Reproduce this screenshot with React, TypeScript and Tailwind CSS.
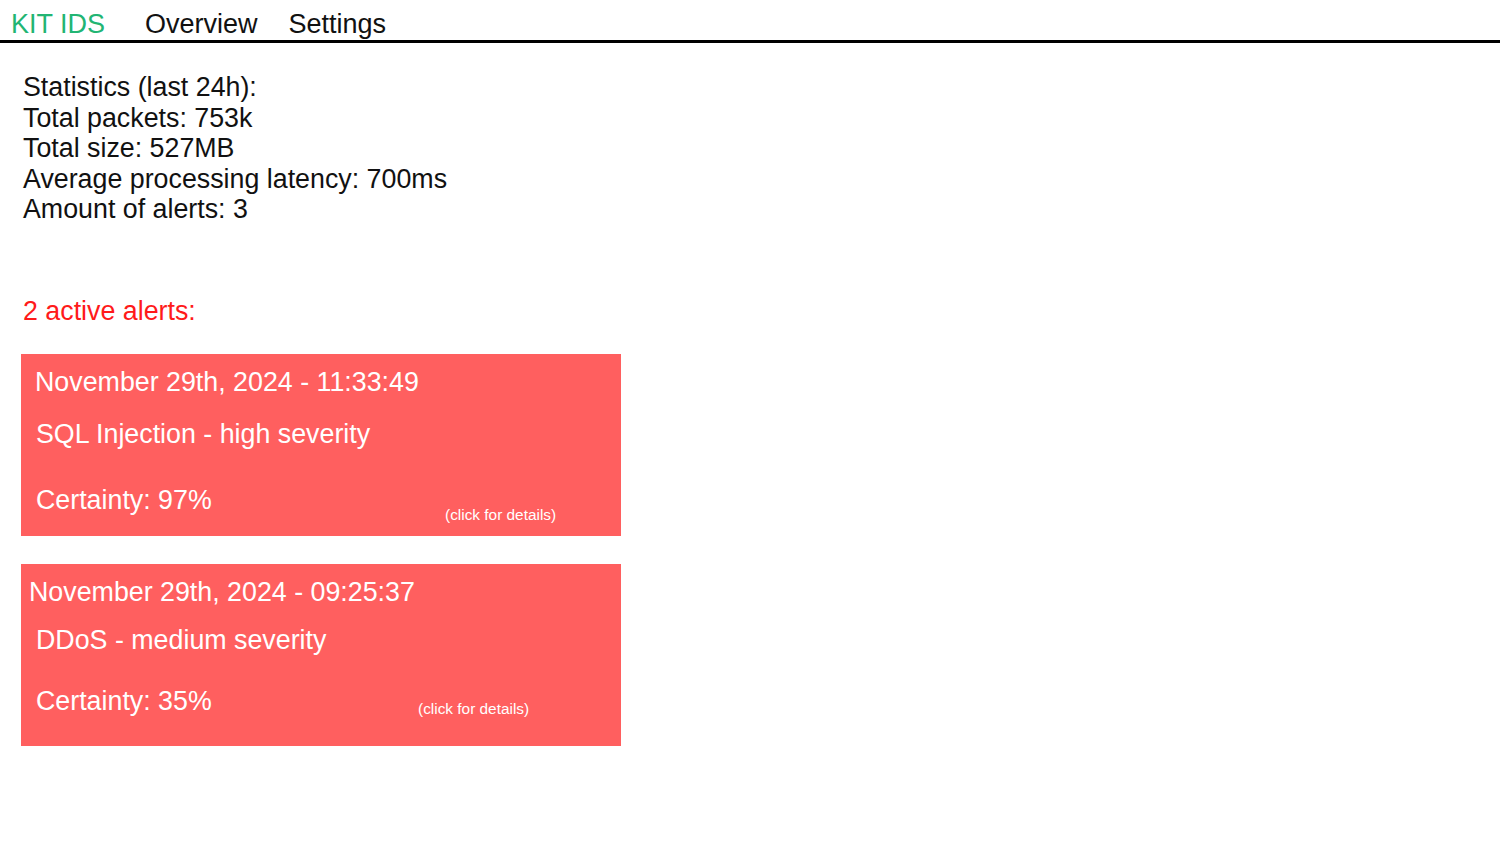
import React from 'react';

type Alert = {
  date: string;
  title: string;
  certainty: string;
  dateX: string;
  clickX: string;
  titleGap: string;
  certGap: string;
  clickDrop: string;
};

const alerts: Alert[] = [
  {
    date: 'November 29th, 2024 - 11:33:49',
    title: 'SQL Injection - high severity',
    certainty: 'Certainty: 97%',
    dateX: 'pl-[14px]',
    clickX: 'ml-[233px]',
    titleGap: 'mt-[22px]',
    certGap: 'mt-[36px]',
    clickDrop: 'mt-[21px]',
  },
  {
    date: 'November 29th, 2024 - 09:25:37',
    title: 'DDoS - medium severity',
    certainty: 'Certainty: 35%',
    dateX: 'pl-[8px]',
    clickX: 'ml-[206px]',
    titleGap: 'mt-[18px]',
    certGap: 'mt-[31px]',
    clickDrop: 'mt-[14px]',
  },
];

function AlertCard({ alert }: { alert: Alert }) {
  return (
    <div className="w-[600px] h-[182px] bg-[#ff5f5f] text-white pt-[13px] cursor-pointer">
      <div className={`text-[26.8px] leading-[30px] ${alert.dateX}`}>{alert.date}</div>
      <div className={`text-[26.8px] leading-[30px] pl-[15px] ${alert.titleGap}`}>{alert.title}</div>
      <div className={`flex items-start pl-[15px] ${alert.certGap}`}>
        <span className="text-[26.8px] leading-[30px] w-[176px] shrink-0">{alert.certainty}</span>
        <span className={`text-[15.4px] leading-[18px] ${alert.clickX} ${alert.clickDrop}`}>(click for details)</span>
      </div>
    </div>
  );
}

export default function App() {
  return (
    <div className="min-h-screen bg-white text-[#111]" style={{ fontFamily: '"Liberation Sans", Arial, sans-serif' }}>
      {/* top navigation */}
      <nav className="flex items-end h-[43px] border-b-[3px] border-black pl-[11px] pb-[1px] text-[27px] leading-[30px]">
        <span className="text-[#22b573]">KIT IDS</span>
        <span className="ml-[40px]">Overview</span>
        <span className="ml-[31px]">Settings</span>
      </nav>

      <div className="pl-[23px] pt-[29px] text-[26.8px] leading-[30.5px]">
        <div>Statistics (last 24h):</div>
        <div>Total packets: 753k</div>
        <div>Total size: 527MB</div>
        <div>Average processing latency: 700ms</div>
        <div>Amount of alerts: 3</div>
      </div>

      <div className="pl-[23px] mt-[71px] text-[26.8px] leading-[30px] text-[#ff1a1a]">2 active alerts:</div>

      <div className="pl-[21px] mt-[28px] flex flex-col gap-[28px]">
        {alerts.map((a) => (
          <AlertCard key={a.date} alert={a} />
        ))}
      </div>
    </div>
  );
}
